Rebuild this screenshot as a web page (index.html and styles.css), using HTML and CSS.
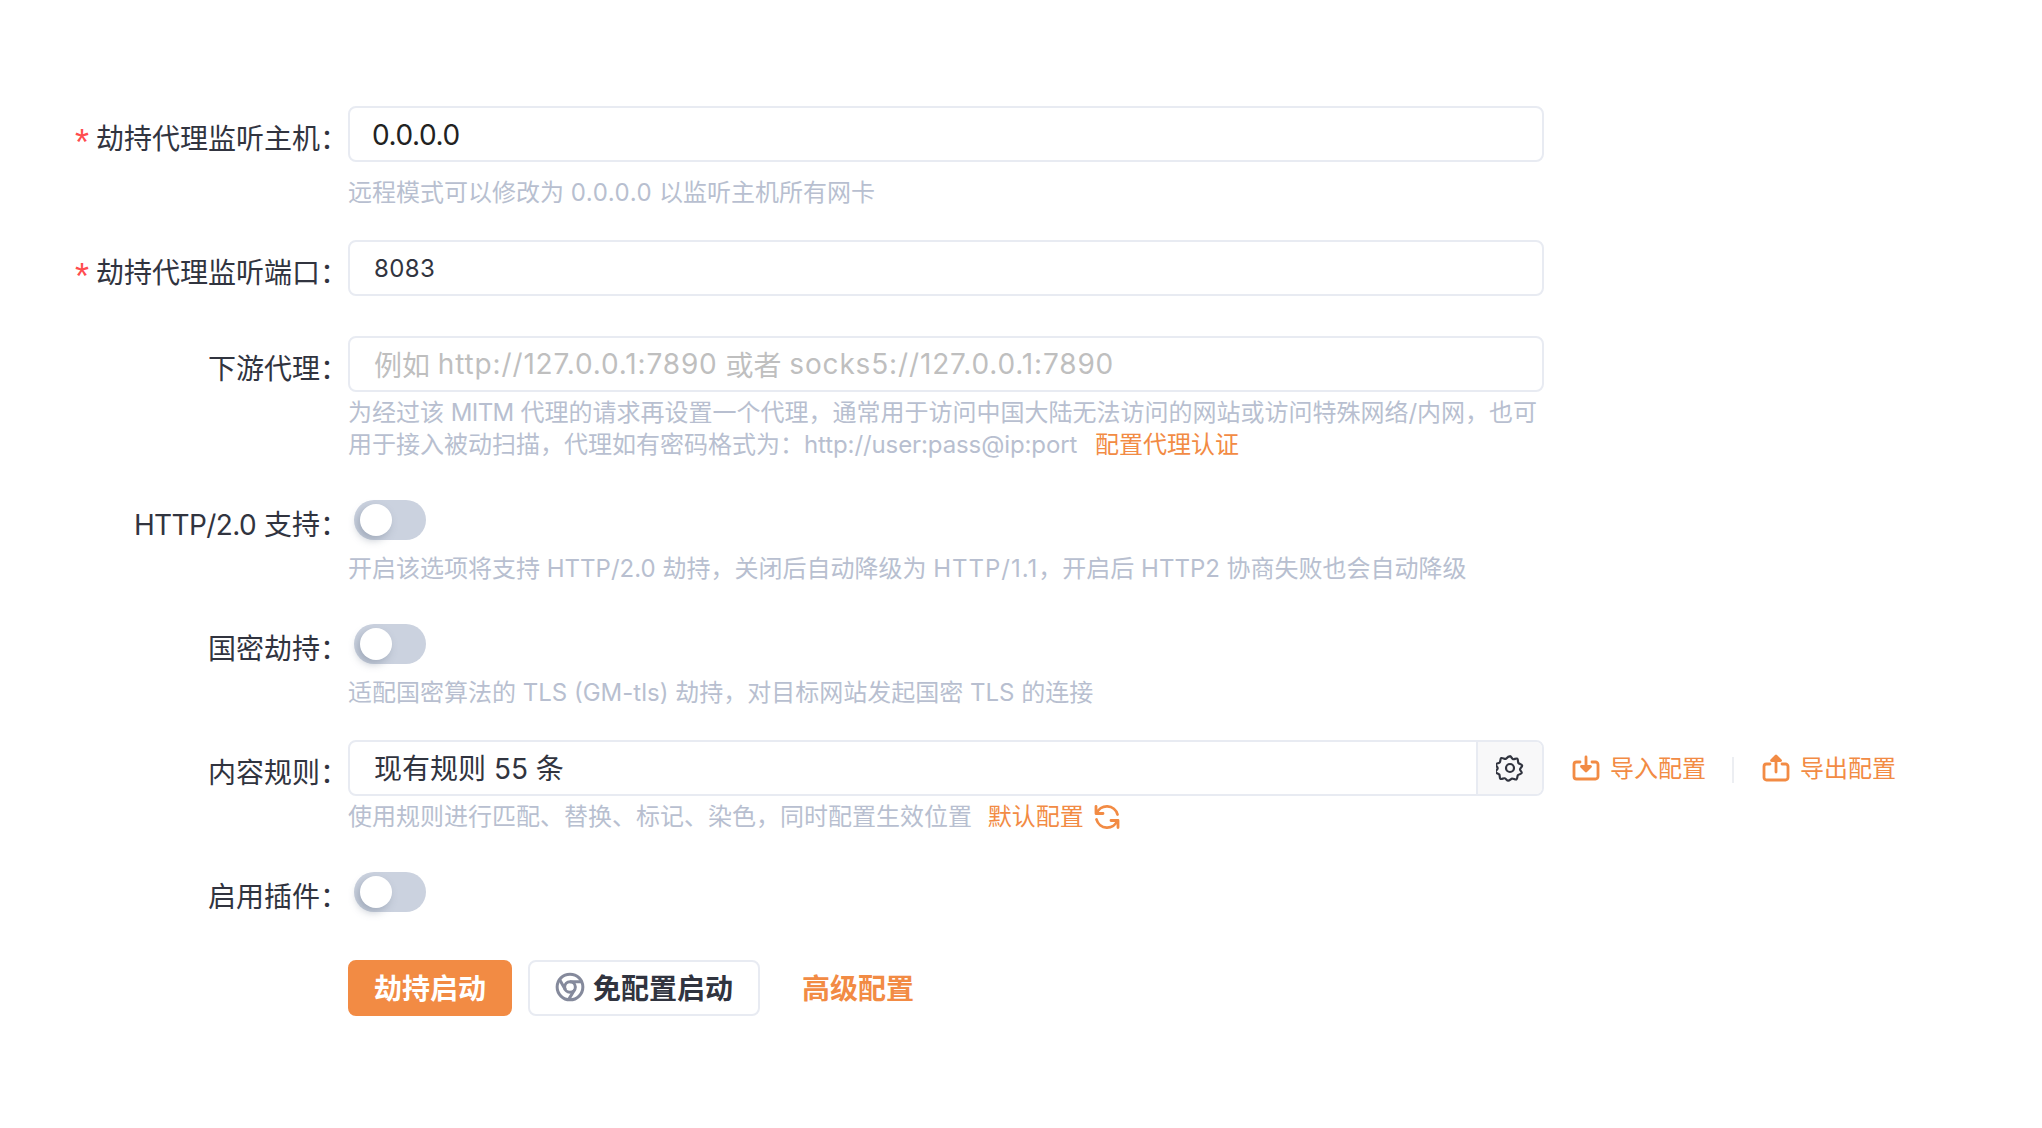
FILE: index.html
```html
<!DOCTYPE html>
<html lang="zh-CN">
<head>
<meta charset="utf-8">
<title>劫持配置</title>
<link rel="stylesheet" href="styles.css">
</head>
<body>
<form class="form">
  <div class="row row-host">
    <div class="label"><span class="req">*</span>劫持代理监听主机：</div>
    <div class="control">
      <div class="input input-lg">0.0.0.0</div>
      <div class="help help-single">远程模式可以修改为 <span class="wide">0.0.0.0</span> 以监听主机所有网卡</div>
    </div>
  </div>
  <div class="row row-port">
    <div class="label"><span class="req">*</span>劫持代理监听端口：</div>
    <div class="control">
      <div class="input input-num">8083</div>
    </div>
  </div>
  <div class="row row-down">
    <div class="label">下游代理：</div>
    <div class="control">
      <div class="input input-ph">例如 <span class="ph-latin">http://127.0.0.1:7890</span> 或者 <span class="ph-latin">socks5://127.0.0.1:7890</span></div>
      <div class="help help-tight">为经过该 <span class="tight">MITM</span> 代理的请求再设置一个代理，通常用于访问中国大陆无法访问的网站或访问特殊网络/内网，也可<br>用于接入被动扫描，代理如有密码格式为：<span class="url">http://user:pass@ip:port</span> <a class="link help-link">配置代理认证</a></div>
    </div>
  </div>
  <div class="row row-switch">
    <div class="label"><span class="tight">HTTP/2.0</span> 支持：</div>
    <div class="control">
      <div class="switch"><span class="knob"></span></div>
      <div class="help help-switch">开启该选项将支持 HTTP/2.0 劫持，关闭后自动降级为 <span class="wider">HTTP/1.1</span>，开启后 HTTP2 协商失败也会自动降级</div>
    </div>
  </div>
  <div class="row row-switch row-switch-last">
    <div class="label">国密劫持：</div>
    <div class="control">
      <div class="switch"><span class="knob"></span></div>
      <div class="help help-switch">适配国密算法的 TLS (GM-tls) 劫持，对目标网站发起国密 TLS 的连接</div>
    </div>
  </div>
  <div class="row row-rules">
    <div class="label">内容规则：</div>
    <div class="control">
      <div class="input-group">
        <div class="input-main">现有规则 55 条</div>
        <div class="addon">
          <svg class="icon-gear" viewBox="0 0 28 28" fill="none" stroke="#31343f" stroke-width="2.200" stroke-linejoin="round"><path d="M14 2.200c1.300 0 1.700 2.600 3 3s3.200-1.300 4.300-.5 .3 3.300 1.100 4.300 3.400 1.200 3.700 2.500-2.100 2.400-2.100 3.800 2.100 2.400 1.700 3.700-3 1.100-3.800 2.200-.3 3.600-1.500 4.200-3.100-1.100-4.400-.8-2.400 2.200-3.800 2.100-2.200-2.100-3.500-2.400-3.200 1.300-4.300.5-.3-3.300-1.100-4.300-3.400-1.200-3.700-2.500 2.100-2.400 2.100-3.800-2.100-2.400-1.700-3.700 3-1.100 3.800-2.200 .3-3.600 1.500-4.200 3.100 1.100 4.400.8 1.900-2.200 3.300-2.200z"/><circle cx="14" cy="14" r="4"/></svg>
        </div>
      </div>
      <div class="help help-tight">使用规则进行匹配、替换、标记、染色，同时配置生效位置 <a class="link help-link">默认配置</a><svg class="icon-refresh" viewBox="0 0 28 28" fill="none" stroke="#f28b44" stroke-width="2.800" stroke-linecap="round" stroke-linejoin="round"><path d="M3 3.500v7h7"/><path d="M3.600 10.500A11 11 0 0 1 24.500 11.500"/><path d="M25 24.500v-7h-7"/><path d="M24.400 17.500A11 11 0 0 1 3.500 16.500"/></svg></div>
    </div>
    <div class="actions">
      <a class="action">
        <svg class="icon-act" viewBox="0 0 28 28" fill="none" stroke="#f28b44" stroke-width="2.800" stroke-linecap="round" stroke-linejoin="round"><path d="M8 8H4.500a2.500 2.500 0 0 0-2.500 2.500v12A2.500 2.500 0 0 0 4.500 25h19a2.500 2.500 0 0 0 2.500-2.500v-12A2.500 2.500 0 0 0 23.500 8H20"/><path d="M14 3v13"/><path d="M9.500 12.500L14 17l4.500-4.500z" fill="#f28b44"/></svg>
        <span class="action-text">导入配置</span>
      </a>
      <span class="divider"></span>
      <a class="action">
        <svg class="icon-act" viewBox="0 0 28 28" fill="none" stroke="#f28b44" stroke-width="2.800" stroke-linecap="round" stroke-linejoin="round"><path d="M8 10H4.500A2.500 2.500 0 0 0 2 12.500v11A2.500 2.500 0 0 0 4.500 26h19a2.500 2.500 0 0 0 2.500-2.500v-11A2.500 2.500 0 0 0 23.500 10H20"/><path d="M14 18V3"/><path d="M9.500 6.500L14 2l4.500 4.500z" fill="#f28b44"/></svg>
        <span class="action-text">导出配置</span>
      </a>
    </div>
  </div>
  <div class="row row-plugin">
    <div class="label">启用插件：</div>
    <div class="control">
      <div class="switch"><span class="knob"></span></div>
    </div>
  </div>
  <div class="row row-buttons">
    <div></div>
    <div class="buttons">
      <button type="button" class="btn btn-primary">劫持启动</button>
      <button type="button" class="btn btn-default">
        <svg class="icon-chrome" viewBox="0 0 28 28" fill="none" stroke="#858a9c" stroke-width="2.800"><circle cx="14" cy="14" r="12"/><circle cx="14" cy="14" r="5"/><path d="M14 9h11.500M9.700 16.500L4 6.500M18.300 16.500L12.500 26"/></svg>
        免配置启动
      </button>
      <a class="link btn-link">高级配置</a>
    </div>
  </div>
</form>
</body>
</html>
```
FILE: styles.css
```css
* { box-sizing: border-box; }
html, body { margin: 0; background: #fff; }
body {
  font-family: Inter, "Noto Sans CJK SC", sans-serif;
  color: #31343f;
  font-size: 28px;
  height: 1128px;
  overflow: hidden;
}
.form { padding-top: 106px; }
.row {
  display: grid;
  grid-template-columns: 348px 1196px auto;
}
.label {
  font-size: 28px;
  line-height: 56px;
  text-align: right;
  white-space: nowrap;
  height: 56px;
  padding-top: 5px;
  color: #31343f;
}
.req {
  color: #ff4d4f;
  margin-right: 7px;
  font-family: "Liberation Sans", sans-serif;
  font-size: 36px;
  line-height: 0;
  vertical-align: -6px;
}
.input, .input-group {
  height: 56px;
  border: 2px solid #e8ebf2;
  border-radius: 8px;
  background: #fff;
}
.input {
  display: flex;
  align-items: center;
  padding: 0 24px;
  white-space: nowrap;
  gap: 0.28em;
}
.input-lg {
  font-size: 28px;
  padding: 2px 22px 0;
  letter-spacing: -0.4px;
  color: #222;
}
.input-num { font-size: 24px; letter-spacing: 0.4px; }
.input-ph {
  color: #bfbfbf;
  font-size: 28px;
  padding-bottom: 1px;
}
.ph-latin { letter-spacing: 0.85px; }
.input-group { display: flex; }
.input-main {
  flex: 1;
  display: flex;
  align-items: center;
  padding: 0 24px 2px;
  font-size: 28px;
}
.addon {
  width: 66px;
  display: flex;
  align-items: center;
  justify-content: center;
  background: #f8f8f9;
  border-left: 2px solid #e8ebf2;
  border-radius: 0 6px 6px 0;
}
.help {
  font-size: 24px;
  line-height: 32px;
  color: #b8bfd0;
  white-space: nowrap;
}
.wide { letter-spacing: 0.55px; }
.wider { letter-spacing: 1px; }
.tight { letter-spacing: -0.6px; }
.url { letter-spacing: -0.1px; margin-right: 2px; }
.help-single { margin-top: 15px; }
.help-tight { margin-top: 5px; }
.help-switch { margin-top: 13px; }
.link { color: #f28b44; }
.help-link { margin-left: 9px; }
.row-host { margin-bottom: 31px; }
.row-port { margin-bottom: 40px; }
.row-down { margin-bottom: 39px; }
.row-switch { margin-bottom: 39px; }
.row-switch-last { margin-bottom: 31px; }
.row-rules { margin-bottom: 39px; }
.row-plugin { margin-bottom: 48px; }
.row-switch .label, .row-plugin .label { line-height: 40px; height: 40px; padding-top: 5px; }
.switch {
  width: 72px;
  height: 40px;
  margin-left: 6px;
  border-radius: 20px;
  background: #cbd2df;
  position: relative;
}
.knob {
  position: absolute;
  left: 6px;
  top: 4px;
  width: 32px;
  height: 32px;
  border-radius: 50%;
  background: #fff;
  box-shadow: -3px 4px 8px rgba(110, 125, 145, .45);
}
.actions {
  display: flex;
  align-items: center;
  height: 56px;
  padding-left: 28px;
}
.action {
  display: flex;
  align-items: center;
  gap: 10px;
  color: #f28b44;
  font-size: 24px;
  white-space: nowrap;
}
.action-text { position: relative; top: -2px; }
.divider {
  width: 2px;
  height: 26px;
  margin: 4px 28px 0 26px;
  background: #eceef2;
}
.icon-act { width: 28px; height: 28px; }
.icon-gear { width: 28px; height: 28px; }
.icon-refresh { width: 28px; height: 28px; vertical-align: -6px; margin-left: 9px; }
.icon-chrome { width: 30px; height: 30px; }
.buttons {
  display: flex;
  align-items: center;
  gap: 16px;
}
.btn {
  font-family: inherit;
  font-size: 28px;
  font-weight: 600;
  height: 56px;
  border-radius: 8px;
  padding: 0 24px 2px;
  display: inline-flex;
  align-items: center;
  border: 2px solid transparent;
}
.btn-primary { background: #f28b44; color: #fff; border-color: #f28b44; }
.btn-default { background: #fff; color: #31343f; border-color: #e8ebf2; gap: 8px; padding-left: 25px; padding-right: 25px; }
.btn-link { font-size: 28px; font-weight: 600; margin-left: 26px; white-space: nowrap; padding-bottom: 2px; }
```
